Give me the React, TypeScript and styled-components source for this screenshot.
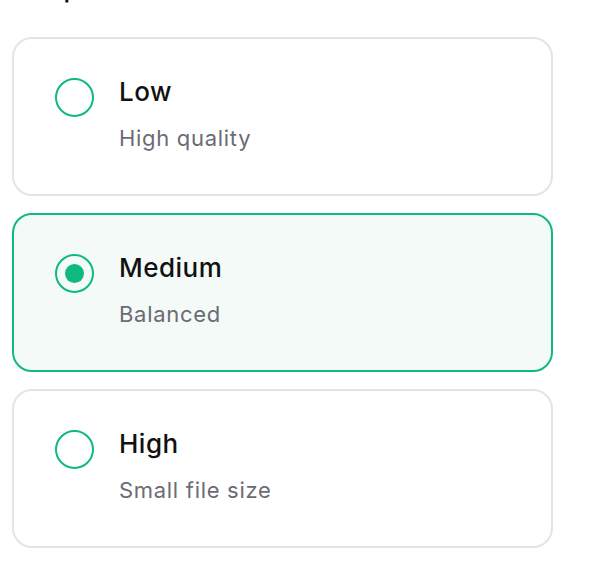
import React, { useState } from 'react';
import styled, { createGlobalStyle } from 'styled-components';

const GlobalStyle = createGlobalStyle`
  body {
    margin: 0;
    background: #ffffff;
    font-family: Inter, "Noto Sans", sans-serif;
  }
`;

const Wrapper = styled.div`
  width: 541px;
  padding-left: 12px;
  overflow: hidden;
`;

const Label = styled.div`
  margin-top: -24px;
  margin-bottom: 33px;
  font-size: 23px;
  line-height: 28px;
  font-weight: 600;
  color: #111111;
`;

const List = styled.div`
  display: flex;
  flex-direction: column;
  gap: 17px;
`;

const Card = styled.label<{ $active: boolean }>`
  display: flex;
  align-items: flex-start;
  gap: 25px;
  height: 159px;
  box-sizing: border-box;
  padding: 38px 40px 0 41px;
  border: 2px solid ${({ $active }) => ($active ? '#10b981' : '#e4e4e7')};
  border-radius: 20px;
  background: ${({ $active }) => ($active ? '#f3faf7' : '#ffffff')};
  cursor: pointer;
`;

const Radio = styled.span<{ $active: boolean }>`
  flex: none;
  width: 39px;
  height: 39px;
  margin-top: 1px;
  box-sizing: border-box;
  border: 2px solid #10b981;
  border-radius: 50%;
  display: flex;
  align-items: center;
  justify-content: center;

  &::after {
    content: '';
    width: 19px;
    height: 19px;
    border-radius: 50%;
    background: #10b981;
    display: ${({ $active }) => ($active ? 'block' : 'none')};
  }
`;

const Text = styled.div`
  display: flex;
  flex-direction: column;
  gap: 19px;
`;

const Title = styled.span`
  font-size: 26px;
  line-height: 30px;
  font-weight: 500;
  letter-spacing: 0.5px;
  color: #111111;
`;

const Sub = styled.span`
  font-size: 22px;
  line-height: 24px;
  letter-spacing: 0.7px;
  color: #6b6b75;
`;

const options = [
  { id: 'low', title: 'Low', sub: 'High quality' },
  { id: 'medium', title: 'Medium', sub: 'Balanced' },
  { id: 'high', title: 'High', sub: 'Small file size' },
];

export default function App() {
  const [level, setLevel] = useState('medium');

  return (
    <>
      <GlobalStyle />
      <Wrapper>
        <Label>Compression Level:</Label>
        <List>
          {options.map((o) => (
            <Card key={o.id} $active={level === o.id} onClick={() => setLevel(o.id)}>
              <Radio $active={level === o.id} />
              <Text>
                <Title>{o.title}</Title>
                <Sub>{o.sub}</Sub>
              </Text>
            </Card>
          ))}
        </List>
      </Wrapper>
    </>
  );
}
